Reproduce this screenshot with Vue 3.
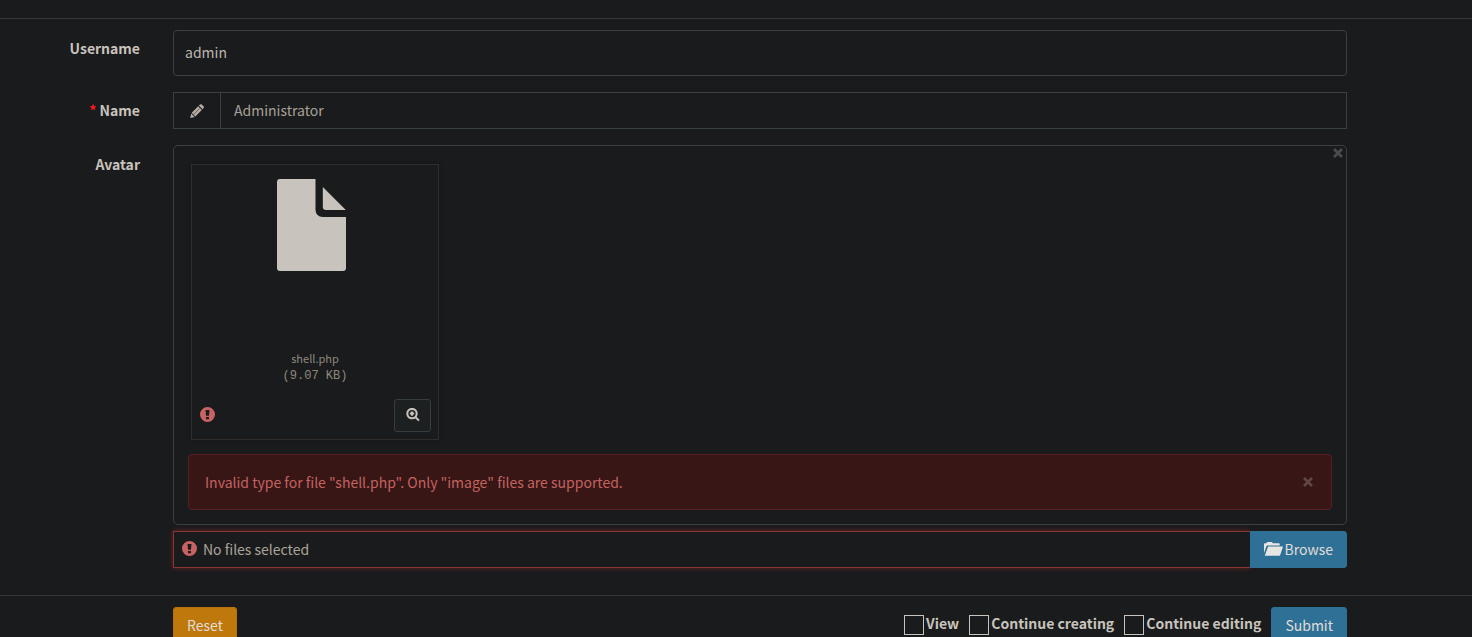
<script setup>
import { ref } from 'vue'

const username = ref('admin')
const name = ref('Administrator')
const options = ref([
  { id: 'view', label: 'View', checked: false },
  { id: 'creating', label: 'Continue creating', checked: false },
  { id: 'editing', label: 'Continue editing', checked: false },
])
</script>

<template>
  <form class="page" @submit.prevent>
    <div class="fields">
      <div class="row">
        <label class="label" for="username">Username</label>
        <input id="username" v-model="username" class="username" type="text" readonly />
      </div>

      <div class="row">
        <label class="label" for="name"><span class="star">*</span> Name</label>
        <div class="group">
          <span class="addon">
            <svg width="14" height="14" viewBox="0 0 14 14" aria-hidden="true">
              <path d="M8.9 1.6 10 .6q.9-.8 1.8 0l1.7 1.7q.8.9 0 1.8l-1 1.1zM8.2 2.3l3.6 3.6-6.5 6.5L1.7 8.8zM1.2 9.4 4.7 12.9.2 13.9z" />
              <path class="groove" d="M3.4 10.7 9.6 4.5" />
            </svg>
          </span>
          <input id="name" v-model="name" class="name" type="text" />
        </div>
      </div>

      <div class="row">
        <label class="label avatar-label" for="avatar">Avatar</label>
        <div class="upload">
          <section class="preview">
            <button class="close corner" type="button" aria-label="Remove all">
              <svg width="10" height="10" viewBox="0 0 10 10"><path d="M1 1 9 9M9 1 1 9" /></svg>
            </button>
            <figure class="frame">
              <div class="thumb">
                <svg width="69" height="92" viewBox="0 0 69 92" aria-hidden="true">
                  <path d="M3 0H38.5V31a7 7 0 0 0 7 7H69V89a3 3 0 0 1-3 3H3a3 3 0 0 1-3-3V3a3 3 0 0 1 3-3z" />
                  <path d="M45.8 8 68.8 31H49a3.2 3.2 0 0 1-3.2-3.2z" />
                </svg>
              </div>
              <figcaption class="caption">
                <span>shell.php</span>
                <samp>(9.07 KB)</samp>
              </figcaption>
              <div class="tools">
                <svg class="alert" width="15" height="15" viewBox="0 0 15 15" aria-hidden="true">
                  <path fill-rule="evenodd" d="M7.5 0a7.5 7.5 0 1 1 0 15a7.5 7.5 0 0 1 0-15zM5.5 3 6 8.7H9L9.5 3zM6 10V12.3H9V10z" />
                </svg>
                <button class="zoom" type="button" aria-label="View details">
                  <svg width="14" height="14" viewBox="0 0 14 14">
                    <circle cx="6" cy="5.6" r="4.7" />
                    <path d="M9.6 9.2 13 12.6M6 3.4V7.8M3.8 5.6H8.2" />
                  </svg>
                </button>
              </div>
            </figure>
            <div class="error" role="alert">
              <span>Invalid type for file "shell.php". Only "image" files are supported.</span>
              <button class="close" type="button" aria-label="Dismiss">
                <svg width="10" height="10" viewBox="0 0 10 10"><path d="M1 1 9 9M9 1 1 9" /></svg>
              </button>
            </div>
          </section>

          <div class="picker">
            <div class="selected">
              <svg class="alert" width="15" height="15" viewBox="0 0 15 15" aria-hidden="true">
                <path fill-rule="evenodd" d="M7.5 0a7.5 7.5 0 1 1 0 15a7.5 7.5 0 0 1 0-15zM5.5 3 6 8.7H9L9.5 3zM6 10V12.3H9V10z" />
              </svg>
              <input id="avatar" class="filename" type="text" value="No files selected" readonly />
            </div>
            <button class="btn browse" type="button">
              <svg width="19" height="15" viewBox="0 0 19 15" aria-hidden="true">
                <path d="M0 12V3.2q0-.9.9-.9H2.5L3.2.9H8l.8 1.4H15q.7 0 .7.7v1.5H3.6q-1 0-1.3.9z" />
                <path d="M4.1 5.6H19L16.2 14q-.2.7-.9.7H.8z" />
              </svg>
              Browse
            </button>
          </div>
        </div>
      </div>
    </div>

    <footer class="row footer">
      <div class="actions">
        <button class="btn reset" type="reset">Reset</button>
        <div class="right">
          <label v-for="o in options" :key="o.id" class="check" :for="o.id">
            <input :id="o.id" v-model="o.checked" type="checkbox" />{{ o.label }}
          </label>
          <button class="btn submit" type="submit">Submit</button>
        </div>
      </div>
    </footer>
  </form>
</template>

<style>
html,
body {
  background: #1a1b1d;
}
</style>

<style scoped>
.page,
.page * {
  box-sizing: border-box;
}
.page {
  height: 100vh;
  overflow: hidden;
  padding-top: 18px;
  background: #1a1b1d;
  color: #c8c3bc;
  font: 14px/20px "Noto Sans CJK SC", "Noto Sans", sans-serif;
}
input,
button {
  margin: 0;
  font: inherit;
  color: inherit;
}
.fields {
  display: flex;
  flex-direction: column;
  gap: 16px;
  padding: 11px 0 27px;
  border-top: 1px solid #34383a;
}
.row {
  display: grid;
  grid-template-columns: 140px minmax(0, 1fr);
  column-gap: 33px;
  padding-right: 125px;
}
.label {
  padding-top: 8px;
  font-weight: 700;
  text-align: right;
}
.avatar-label {
  padding-top: 9px;
}
.star {
  color: #ff1a1a;
}
.username {
  width: 100%;
  height: 46px;
  padding: 0 11px 2px;
  border: 1px solid #3b4042;
  border-radius: 4px;
  background: transparent;
  color: #bdb7af;
  outline: none;
}
.group {
  display: flex;
  height: 37px;
  border: 1px solid #3b4042;
}
.addon {
  display: flex;
  align-items: center;
  justify-content: center;
  width: 47px;
  border-right: 1px solid #3b4042;
  fill: #b2aca2;
}
.groove {
  stroke: #1a1b1d;
  stroke-width: 0.5;
}
.name {
  flex: 1;
  min-width: 0;
  padding: 0 13px 2px;
  border: 0;
  background: transparent;
  color: #a8a196;
  outline: none;
}
.preview {
  position: relative;
  padding: 18px 14px 14px;
  border: 1px solid #3b4042;
  border-radius: 5px;
}
.close {
  display: flex;
  padding: 0;
  border: 0;
  background: none;
  stroke: #5e4744;
  stroke-width: 2.6;
}
.corner {
  position: absolute;
  top: 2px;
  right: 3px;
  stroke: #4b4c4c;
}
.frame {
  display: flex;
  flex-direction: column;
  width: 248px;
  height: 276px;
  margin: 0 0 14px 3px;
  padding: 14px 7px 7px;
  border: 1px solid #302e2c;
  box-shadow: 0 0 5px rgba(0, 0, 0, 0.2);
}
.thumb {
  height: 171px;
  padding-right: 7px;
  text-align: center;
  fill: #c8c3bc;
}
.caption {
  display: flex;
  flex-direction: column;
  gap: 2px;
  align-items: center;
  color: #8f887d;
  font-size: 11px;
  line-height: 16px;
}
.caption samp {
  font: 12px/16px "Liberation Mono", monospace;
}
.tools {
  display: flex;
  align-items: center;
  justify-content: space-between;
  margin-top: auto;
  padding-left: 1px;
}
.alert {
  flex: none;
  margin-bottom: 2px;
  fill: #c76463;
}
.zoom {
  display: flex;
  align-items: center;
  justify-content: center;
  width: 37px;
  height: 33px;
  padding: 0 0 2px;
  border: 1px solid #373c3e;
  border-radius: 3px;
  background: #1d2021;
  fill: none;
  stroke: #c8c3bc;
  stroke-width: 2;
}
.error {
  display: flex;
  align-items: center;
  justify-content: space-between;
  height: 56px;
  padding: 0 18px 0 16px;
  border: 1px solid #5a1f26;
  border-radius: 4px;
  background: #381616;
  color: #c46361;
}
.picker {
  display: flex;
  height: 37px;
  margin-top: 6px;
}
.selected {
  display: flex;
  flex: 1;
  align-items: center;
  gap: 6px;
  padding-left: 8px;
  border: 1px solid #8d3434;
  border-right: 0;
  box-shadow: 0 0 5px #6b2625;
}
.filename {
  flex: 1;
  min-width: 0;
  padding: 0 0 2px;
  border: 0;
  background: transparent;
  color: #aaa499;
  outline: none;
}
.btn {
  display: flex;
  align-items: center;
  justify-content: center;
  height: 37px;
  padding: 0 13px 2px;
  border: 1px solid #2f7196;
  border-radius: 3px;
  background: #2f7196;
  color: #e0ddd9;
}
.browse {
  position: relative;
  gap: 2px;
  border-radius: 0 3px 3px 0;
  fill: #e8e6e3;
}
.footer {
  padding-top: 11px;
  border-top: 1px solid #34383a;
}
.actions {
  display: flex;
  grid-column: 2;
  justify-content: space-between;
}
.right {
  display: flex;
  gap: 10px;
}
.check {
  display: flex;
  gap: 2px;
  height: 32px;
  align-items: center;
  font-weight: 700;
}
.check input {
  appearance: none;
  width: 20px;
  height: 20px;
  margin-top: 4px;
  border: 1px solid #c8c3bc;
}
.reset {
  border-color: #b8730a;
  background: #bf780c;
}
</style>
